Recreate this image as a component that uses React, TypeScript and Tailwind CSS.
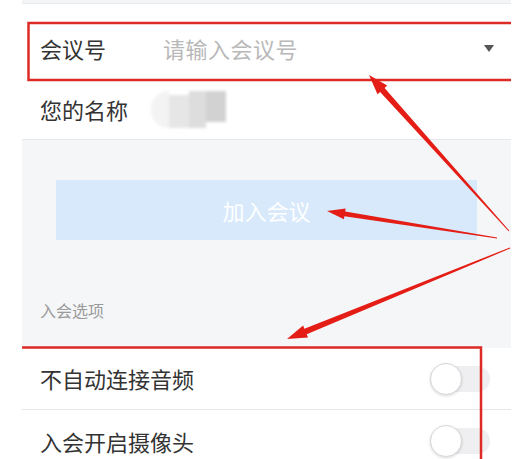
import React from 'react';

const font = { fontFamily: '"Noto Sans CJK SC", "Noto Sans", sans-serif' };

type Pt = [number, number];

// tapered annotation arrow: thin at the tail, wide at the head
function arrowPoints(tail: Pt, tip: Pt, headLen = 20, headW = 13, shaftW = 6) {
  const dx = tip[0] - tail[0];
  const dy = tip[1] - tail[1];
  const len = Math.hypot(dx, dy);
  const ux = dx / len;
  const uy = dy / len;
  const nx = -uy;
  const ny = ux;
  const bx = tip[0] - ux * headLen;
  const by = tip[1] - uy * headLen;
  const p = (x: number, y: number) => `${x.toFixed(1)},${y.toFixed(1)}`;
  return [
    p(tail[0] + nx * 0.5, tail[1] + ny * 0.5),
    p(bx + nx * (shaftW / 2), by + ny * (shaftW / 2)),
    p(bx + nx * (headW / 2), by + ny * (headW / 2)),
    p(tip[0], tip[1]),
    p(bx - nx * (headW / 2), by - ny * (headW / 2)),
    p(bx - nx * (shaftW / 2), by - ny * (shaftW / 2)),
    p(tail[0] - nx * 0.5, tail[1] - ny * 0.5),
  ].join(' ');
}

function Toggle() {
  return (
    <div className="relative w-[60px] h-[32px] flex items-center">
      <div className="w-[60px] h-[26px] rounded-full bg-[#efeff1]" />
      <div className="absolute left-0 top-0 w-[32px] h-[32px] rounded-full bg-white border border-[#d8d8d8] shadow-[0_1px_3px_rgba(0,0,0,0.15)]" />
    </div>
  );
}

function OptionRow({ label, border }: { label: string; border?: boolean }) {
  return (
    <div
      className={`shrink-0 flex items-center justify-between pl-[18px] pr-[21px] h-[62px] bg-white ${
        border ? 'border-b border-[#e6e6e6]' : ''
      }`}
    >
      <span className="text-[22px] text-[#333333]">{label}</span>
      <Toggle />
    </div>
  );
}

export default function App() {
  return (
    <div className="relative w-[523px] h-[459px] overflow-hidden bg-white flex" style={font}>
      <div className="w-[22px] shrink-0 bg-white" />

      <div className="w-[489px] shrink-0 flex flex-col bg-[#f5f6f8]">
        <div className="shrink-0 h-[4px] bg-[#f4f5f7] border-b border-[#e9eaec]" />

        {/* Meeting number */}
        <div className="shrink-0 h-[79px] pt-[10px] pl-[18px] pr-[17px] flex items-center bg-white">
          <span className="w-[123px] text-[22px] text-[#333333]">会议号</span>
          <span className="flex-1 text-[22px] text-[#b8b8b8] tracking-[0.5px]">请输入会议号</span>
          <svg width="10" height="7" viewBox="0 0 10 7">
            <path d="M0 0 H10 L5 7 Z" fill="#555555" />
          </svg>
        </div>

        {/* Name */}
        <div className="shrink-0 h-[57px] pb-[3px] pl-[18px] flex items-center bg-white border-b border-[#e8e8ea]">
          <span className="text-[22px] text-[#333333]">您的名称</span>
          <div className="ml-[23px] flex h-[37px] blur-[1.5px]">
            <div className="w-[18px] rounded-l-full bg-[#f3f3f3]" />
            <div className="w-[20px] bg-[#e6e6e6] mt-[4px]" />
            <div className="w-[17px] bg-[#dddddd]" />
            <div className="w-[20px] bg-[#d2d2d2] mb-[6px]" />
          </div>
        </div>

        {/* Join button + options header */}
        <div className="shrink-0 h-[208px] flex flex-col">
          <div className="mt-[40px] mx-[34px] h-[60px] bg-[#d7e9fb] flex items-center justify-center">
            <span className="text-[22px] text-white">加入会议</span>
          </div>
          <span className="mt-[58px] pl-[18px] text-[16px] text-[#9a9a9a]">入会选项</span>
        </div>

        <OptionRow label="不自动连接音频" border />
        <OptionRow label="入会开启摄像头" />
      </div>

      <div className="flex-1 bg-white" />

      {/* annotations */}
      <svg className="absolute inset-0 pointer-events-none" width="523" height="459" viewBox="0 0 523 459">
        <path d="M511 23 H28.5 V80 H511" fill="none" stroke="#dd2a24" strokeWidth="2.5" />
        <path d="M22 347.5 H481 V459" fill="none" stroke="#dd2a24" strokeWidth="2.5" />
        <polygon points={arrowPoints([509, 231], [369, 75])} fill="#e41e16" />
        <polygon points={arrowPoints([497, 238], [327, 211], 18, 11, 5)} fill="#e41e16" />
        <polygon points={arrowPoints([510, 248], [287, 339])} fill="#e41e16" />
      </svg>
    </div>
  );
}
